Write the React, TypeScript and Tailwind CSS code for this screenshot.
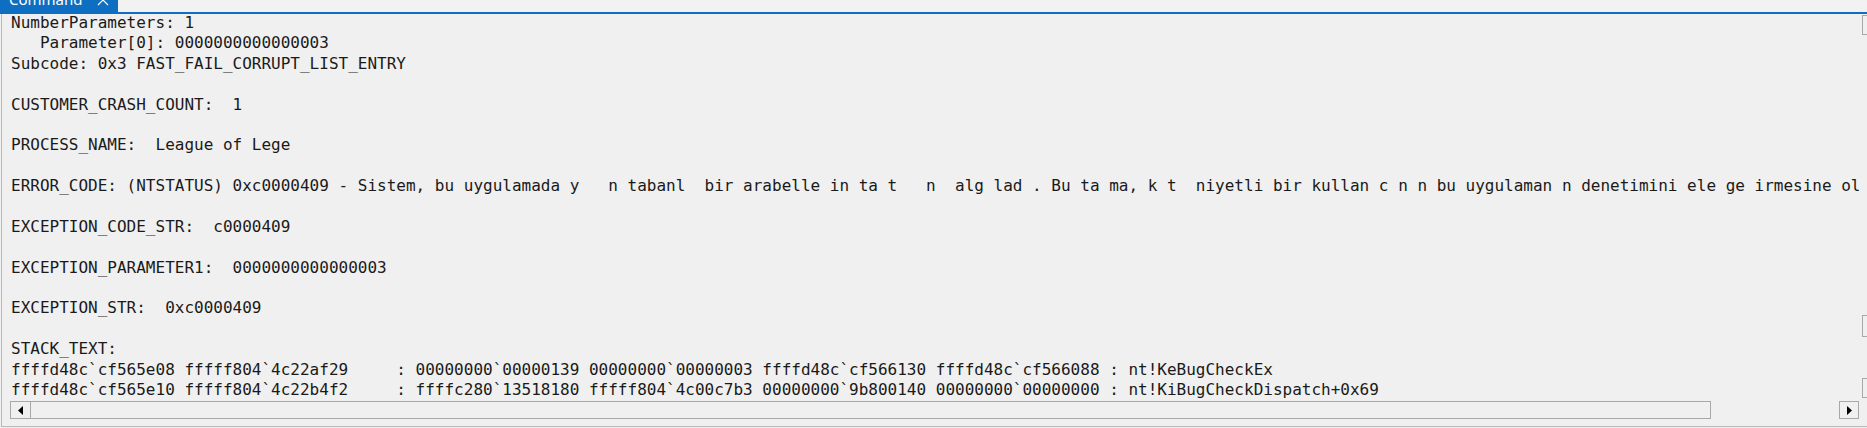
const errorLine =
  'ERROR_CODE: (NTSTATUS) 0xc0000409 - Sistem, bu uygulamada y   n tabanl  bir arabelle in ta t   n  alg lad . Bu ta ma, k t  niyetli bir kullan c n n bu uygulaman n denetimini ele ge irmesine olanak verebilir.';

const lines = [
  'NumberParameters: 1',
  '   Parameter[0]: 0000000000000003',
  'Subcode: 0x3 FAST_FAIL_CORRUPT_LIST_ENTRY',
  '',
  'CUSTOMER_CRASH_COUNT:  1',
  '',
  'PROCESS_NAME:  League of Lege',
  '',
  errorLine,
  '',
  'EXCEPTION_CODE_STR:  c0000409',
  '',
  'EXCEPTION_PARAMETER1:  0000000000000003',
  '',
  'EXCEPTION_STR:  0xc0000409',
  '',
  'STACK_TEXT:  ',
  'ffffd48c`cf565e08 fffff804`4c22af29     : 00000000`00000139 00000000`00000003 ffffd48c`cf566130 ffffd48c`cf566088 : nt!KeBugCheckEx',
  'ffffd48c`cf565e10 fffff804`4c22b4f2     : ffffc280`13518180 fffff804`4c00c7b3 00000000`9b800140 00000000`00000000 : nt!KiBugCheckDispatch+0x69',
];

function Arrow({ dir }: { dir: 'left' | 'right' }) {
  return (
    <svg width="5" height="9" viewBox="0 0 5 9" className="text-black">
      {dir === 'left' ? (
        <polygon points="5,0 5,9 0,4.5" fill="currentColor" />
      ) : (
        <polygon points="0,0 0,9 5,4.5" fill="currentColor" />
      )}
    </svg>
  );
}

export default function App() {
  return (
    <div className="w-[1867px] h-[428px] bg-[#f0f0f0] flex flex-col overflow-hidden">
      {/* tab strip, mostly scrolled off the top */}
      <div className="h-[12px] flex shrink-0">
        <div className="w-[118px] bg-[#0e6fc2] overflow-hidden flex items-start text-white font-['Noto_Sans',sans-serif] text-[15px] leading-[16px]">
          <span className="-mt-[9px] ml-[9px]">Command</span>
          <svg width="12" height="12" viewBox="0 0 12 12" className="ml-[14px] -mt-[6px] shrink-0">
            <path d="M1 1 L11 11 M11 1 L1 11" stroke="white" strokeWidth="1.2" fill="none" />
          </svg>
        </div>
        <div className="flex-1 bg-[#f2f2f2]" />
      </div>
      <div className="h-[2px] bg-[#0e6fc2] shrink-0" />

      <div className="flex-1 flex min-h-0 ml-[1px] border-l border-b border-[#b9b9b9] mb-[1px]">
        <div className="flex-1 min-w-0 flex flex-col">
          <div className="flex-1 min-h-0 overflow-hidden pl-[9px] -mt-[1px] font-['DejaVu_Sans_Mono',monospace] text-[16px] leading-[20.4px] text-[#1a1a1a] whitespace-pre">
            {lines.map((l, i) => (
              <div key={i} className="h-[20.4px]">
                {l}
              </div>
            ))}
          </div>

          {/* horizontal scrollbar */}
          <div className="h-[18px] ml-[8px] flex shrink-0">
            <div className="w-[21px] border border-[#a8a8a8] flex items-center justify-center bg-[#f0f0f0]">
              <Arrow dir="left" />
            </div>
            <div className="w-[1680px] border-y border-r border-[#a8a8a8]" />
            <div className="flex-1" />
            <div className="w-[20px] border border-[#a8a8a8] flex items-center justify-center bg-[#f0f0f0]">
              <Arrow dir="right" />
            </div>
          </div>
          <div className="h-[7px] shrink-0" />
        </div>

        {/* vertical scrollbar, clipped at the window edge */}
        <div className="w-[5px] ml-[3px] flex flex-col shrink-0">
          <div className="mt-[1px] h-[20px] border-l border-y border-[#a8a8a8]" />
          <div className="mt-[280px] h-[22px] border-l border-y border-[#a8a8a8]" />
          <div className="mt-[41px] h-[20px] border-l border-y border-[#a8a8a8]" />
        </div>
      </div>
    </div>
  );
}
